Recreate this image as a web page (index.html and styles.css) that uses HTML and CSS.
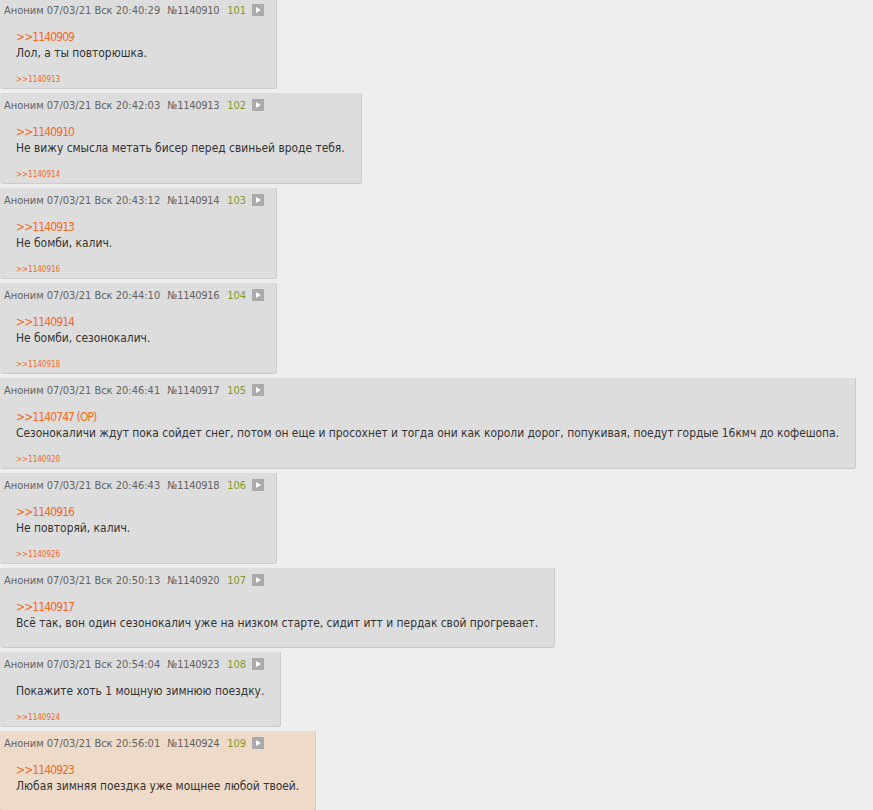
FILE: index.html
```html
<!DOCTYPE html>
<html lang="ru">
<head>
<meta charset="utf-8">
<link rel="stylesheet" href="styles.css">
</head>
<body>
<div class="thread">

  <div class="post first">
    <div class="post-head">
      <span class="meta">Аноним 07/03/21 Вск 20:40:29</span>
      <span class="num">№1140910</span>
      <span class="count">101</span>
      <span class="play"><svg viewBox="0 0 12 12" width="12" height="12"><rect width="12" height="12" fill="#aaa"/><path d="M4 3 L9 6 L4 9 Z" fill="#fff"/></svg></span>
    </div>
    <div class="msg"><a class="quote">&gt;&gt;1140909</a><br>Лол, а ты повторюшка.</div>
    <div class="replies"><a class="reply">&gt;&gt;1140913</a></div>
  </div>

  <div class="post">
    <div class="post-head">
      <span class="meta">Аноним 07/03/21 Вск 20:42:03</span>
      <span class="num">№1140913</span>
      <span class="count">102</span>
      <span class="play"><svg viewBox="0 0 12 12" width="12" height="12"><rect width="12" height="12" fill="#aaa"/><path d="M4 3 L9 6 L4 9 Z" fill="#fff"/></svg></span>
    </div>
    <div class="msg"><a class="quote">&gt;&gt;1140910</a><br>Не вижу смысла метать бисер перед свиньей вроде тебя.</div>
    <div class="replies"><a class="reply">&gt;&gt;1140914</a></div>
  </div>

  <div class="post">
    <div class="post-head">
      <span class="meta">Аноним 07/03/21 Вск 20:43:12</span>
      <span class="num">№1140914</span>
      <span class="count">103</span>
      <span class="play"><svg viewBox="0 0 12 12" width="12" height="12"><rect width="12" height="12" fill="#aaa"/><path d="M4 3 L9 6 L4 9 Z" fill="#fff"/></svg></span>
    </div>
    <div class="msg"><a class="quote">&gt;&gt;1140913</a><br>Не бомби, калич.</div>
    <div class="replies"><a class="reply">&gt;&gt;1140916</a></div>
  </div>

  <div class="post">
    <div class="post-head">
      <span class="meta">Аноним 07/03/21 Вск 20:44:10</span>
      <span class="num">№1140916</span>
      <span class="count">104</span>
      <span class="play"><svg viewBox="0 0 12 12" width="12" height="12"><rect width="12" height="12" fill="#aaa"/><path d="M4 3 L9 6 L4 9 Z" fill="#fff"/></svg></span>
    </div>
    <div class="msg"><a class="quote">&gt;&gt;1140914</a><br>Не бомби, сезонокалич.</div>
    <div class="replies"><a class="reply">&gt;&gt;1140918</a></div>
  </div>

  <div class="post">
    <div class="post-head">
      <span class="meta">Аноним 07/03/21 Вск 20:46:41</span>
      <span class="num">№1140917</span>
      <span class="count">105</span>
      <span class="play"><svg viewBox="0 0 12 12" width="12" height="12"><rect width="12" height="12" fill="#aaa"/><path d="M4 3 L9 6 L4 9 Z" fill="#fff"/></svg></span>
    </div>
    <div class="msg"><a class="quote">&gt;&gt;1140747 (OP)</a><br>Сезонокаличи ждут пока сойдет снег, потом он еще и просохнет и тогда они как короли дорог, попукивая, поедут гордые 16кмч до кофешопа.</div>
    <div class="replies"><a class="reply">&gt;&gt;1140920</a></div>
  </div>

  <div class="post">
    <div class="post-head">
      <span class="meta">Аноним 07/03/21 Вск 20:46:43</span>
      <span class="num">№1140918</span>
      <span class="count">106</span>
      <span class="play"><svg viewBox="0 0 12 12" width="12" height="12"><rect width="12" height="12" fill="#aaa"/><path d="M4 3 L9 6 L4 9 Z" fill="#fff"/></svg></span>
    </div>
    <div class="msg"><a class="quote">&gt;&gt;1140916</a><br>Не повторяй, калич.</div>
    <div class="replies"><a class="reply">&gt;&gt;1140926</a></div>
  </div>

  <div class="post">
    <div class="post-head">
      <span class="meta">Аноним 07/03/21 Вск 20:50:13</span>
      <span class="num">№1140920</span>
      <span class="count">107</span>
      <span class="play"><svg viewBox="0 0 12 12" width="12" height="12"><rect width="12" height="12" fill="#aaa"/><path d="M4 3 L9 6 L4 9 Z" fill="#fff"/></svg></span>
    </div>
    <div class="msg"><a class="quote">&gt;&gt;1140917</a><br>Всё так, вон один сезонокалич уже на низком старте, сидит итт и пердак свой прогревает.</div>
  </div>

  <div class="post">
    <div class="post-head">
      <span class="meta">Аноним 07/03/21 Вск 20:54:04</span>
      <span class="num">№1140923</span>
      <span class="count">108</span>
      <span class="play"><svg viewBox="0 0 12 12" width="12" height="12"><rect width="12" height="12" fill="#aaa"/><path d="M4 3 L9 6 L4 9 Z" fill="#fff"/></svg></span>
    </div>
    <div class="msg"><span class="plain">Покажите хоть 1 мощную зимнюю поездку.</span></div>
    <div class="replies"><a class="reply">&gt;&gt;1140924</a></div>
  </div>

  <div class="post highlight">
    <div class="post-head">
      <span class="meta">Аноним 07/03/21 Вск 20:56:01</span>
      <span class="num">№1140924</span>
      <span class="count">109</span>
      <span class="play"><svg viewBox="0 0 12 12" width="12" height="12"><rect width="12" height="12" fill="#aaa"/><path d="M4 3 L9 6 L4 9 Z" fill="#fff"/></svg></span>
    </div>
    <div class="msg"><a class="quote">&gt;&gt;1140923</a><br>Любая зимняя поездка уже мощнее любой твоей.</div>
  </div>

</div>
</body>
</html>
```

FILE: styles.css
```css
html, body {
  margin: 0;
  padding: 0;
  background: #eeeeee;
}

body {
  font-family: "DejaVu Sans Condensed", "DejaVu Sans", sans-serif;
  color: #333;
}

.thread {
  display: flex;
  flex-direction: column;
  align-items: flex-start;
  gap: 4px;
}

.post {
  background: #dddddd;
  border-right: 1px solid #cccccc;
  border-bottom: 1px solid #cccccc;
  border-radius: 0 0 3px 3px;
  padding: 0 0 4px 0;
}

.post.first {
  margin-top: -2px;
}

.post.highlight {
  background: #eedac8;
  border-color: #e0cbb8;
}

.post-head {
  display: flex;
  align-items: center;
  padding: 4px 12px 0 4px;
  height: 16px;
  font-size: 11px;
  color: #636363;
  white-space: nowrap;
}

.num {
  margin-left: 7px;
  letter-spacing: -0.3px;
}

.count {
  margin-left: 8px;
  color: #7f9a2a;
}

.play {
  margin-left: 6px;
  display: flex;
}

.msg {
  margin: 11px 16px 12px 16px;
  font-size: 11.9px;
  line-height: 16px;
  color: #333;
}

.quote {
  color: #f26a1b;
  font-size: 12px;
  letter-spacing: -0.9px;
}

.replies {
  margin: 1px 16px 0 16px;
  font-size: 8px;
  line-height: 13px;
}

.post:has(.replies) {
  padding-bottom: 2px;
}

.reply {
  color: #f26a1b;
}
```
